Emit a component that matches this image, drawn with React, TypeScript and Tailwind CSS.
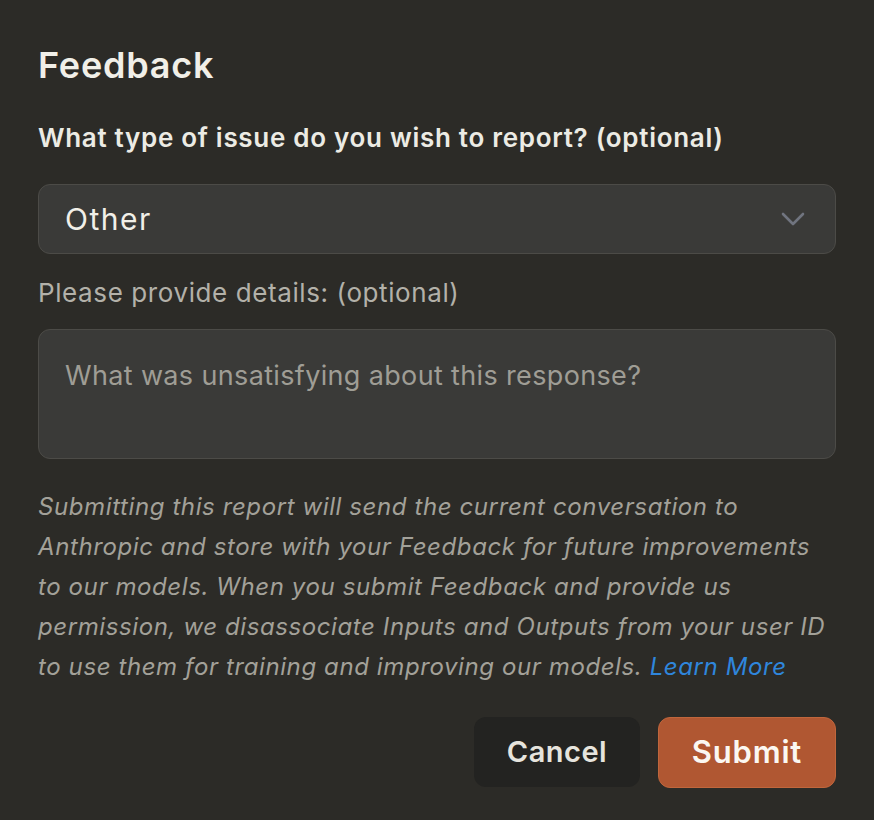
const App = () => {
  return (
    <div
      className="w-[874px] h-[820px] bg-[#2c2b27] px-[38px] pt-[44px] text-[#f1efe8]"
      style={{ fontFamily: "Inter, 'Noto Sans', sans-serif" }}
    >
      <h1 className="text-[36px] font-semibold leading-[42px] tracking-[0.8px]">Feedback</h1>
      <p className="mt-[36px] text-[26px] font-semibold leading-[32px] tracking-[0.7px] text-[#ecebe4]">
        What type of issue do you wish to report? (optional)
      </p>
      <div className="mt-[30px] h-[70px] rounded-[12px] border border-[#4c4b47] bg-[#3a3a38] flex items-center justify-between pl-[26px] pr-[30px]">
        <span className="text-[30px] tracking-[1.5px] text-[#f1efe8]">Other</span>
        <svg width="24" height="14" viewBox="0 0 24 14" fill="none">
          <polyline points="2,2 12,12 22,2" stroke="#70747f" strokeWidth="2.6" strokeLinecap="round" strokeLinejoin="round" />
        </svg>
      </div>
      <p className="mt-[23px] text-[26px] leading-[32px] tracking-[0.6px] text-[#b3b1a9]">Please provide details: (optional)</p>
      <div className="mt-[20px] h-[130px] rounded-[12px] border border-[#4c4b47] bg-[#3a3a38] px-[26px] pt-[30px]">
        <span className="text-[27px] leading-[32px] tracking-[0.35px] text-[#9f9d95]">What was unsatisfying about this response?</span>
      </div>
      <p className="mt-[28px] text-[24px] italic leading-[40px] tracking-[0.6px] text-[#a3a199] whitespace-nowrap">
        Submitting this report will send the current conversation to
        <br />
        Anthropic and store with your Feedback for future improvements
        <br />
        to our models. When you submit Feedback and provide us
        <br />
        permission, we disassociate Inputs and Outputs from your user ID
        <br />
        to use them for training and improving our models. <span className="text-[#2f86dc]">Learn More</span>
      </p>
      <div className="mt-[30px] flex justify-end gap-[18px]">
        <button className="h-[70px] w-[166px] rounded-[12px] bg-[#232321] text-[29px] font-semibold tracking-[0.5px] text-[#e6e4dd]">
          Cancel
        </button>
        <button className="h-[71px] w-[178px] rounded-[12px] bg-[#b05732] border border-[#c0663c] text-[31px] font-semibold tracking-[0.8px] text-[#fbf8f2]">
          Submit
        </button>
      </div>
    </div>
  );
};

export default App;
